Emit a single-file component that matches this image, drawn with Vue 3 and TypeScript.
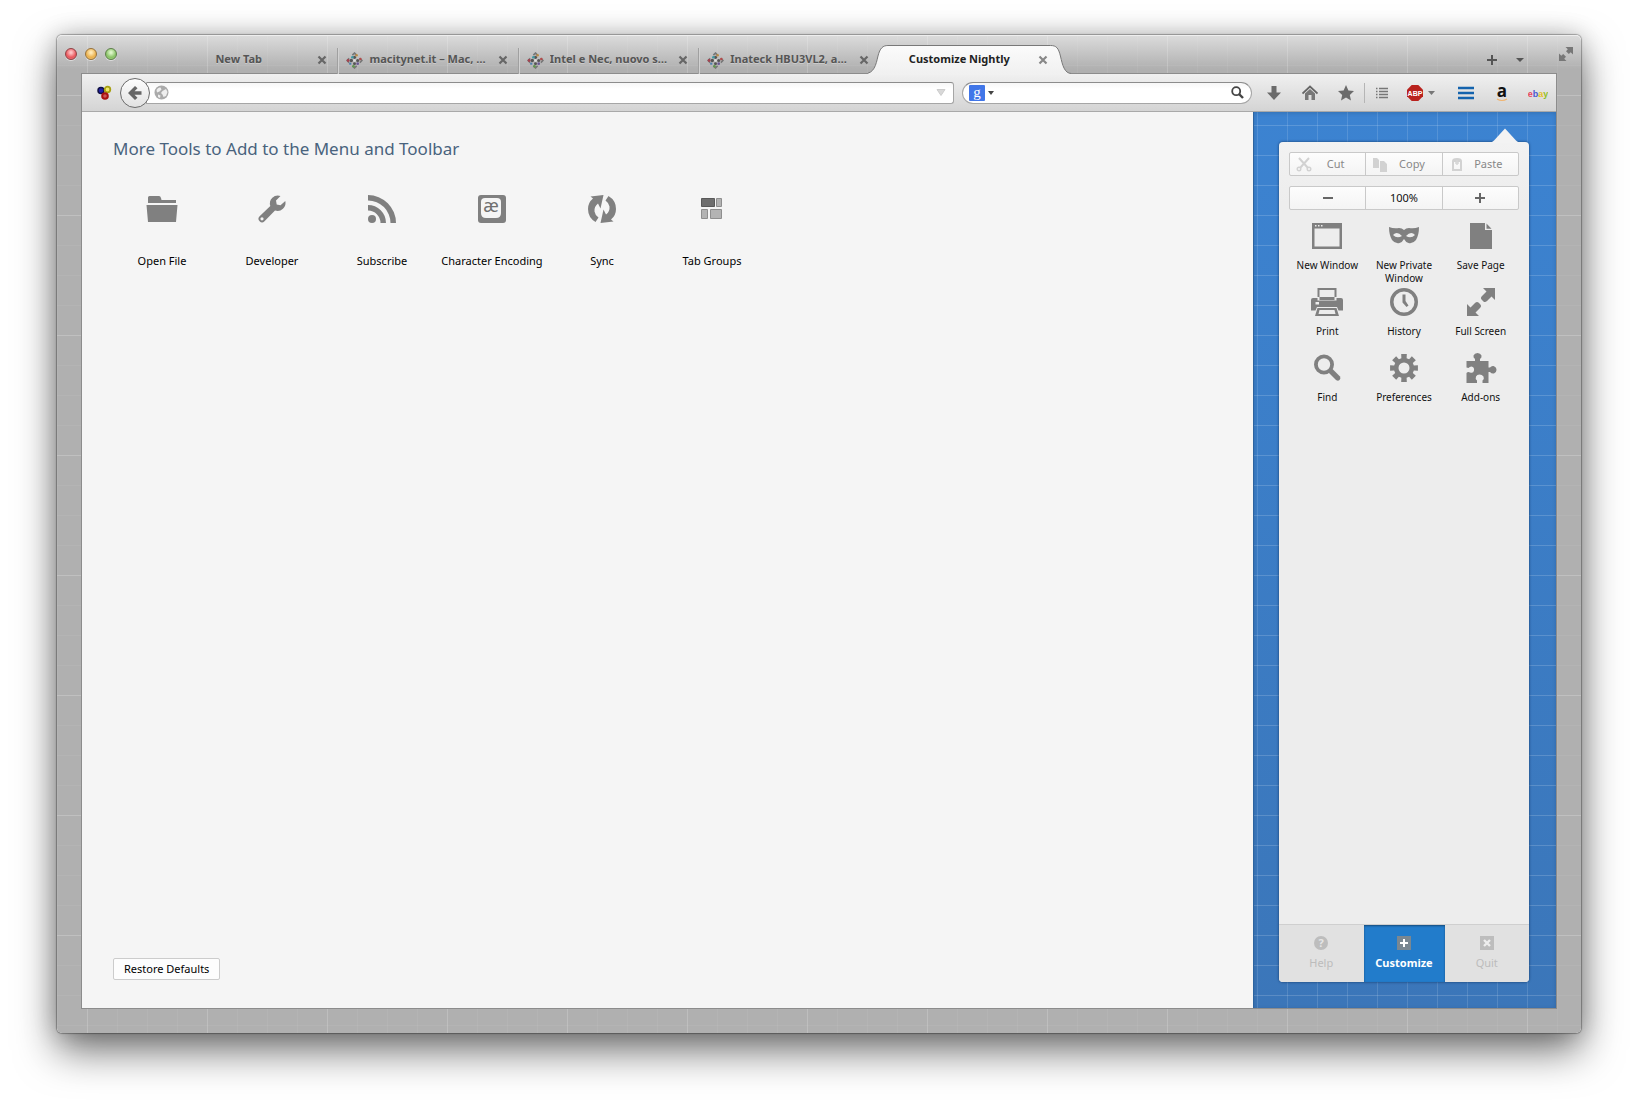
<script setup lang="ts">
import { ref } from 'vue'

interface Shape {
  d: string
  fill?: string
  stroke?: string
  width?: number
}
interface Tool {
  label: string
  shapes: Shape[]
  glyph?: string
}
interface Tab {
  title: string
  icon: boolean
  active?: boolean
}

const tabs: Tab[] = [
  { title: 'New Tab', icon: false },
  { title: 'macitynet.it – Mac, …', icon: true },
  { title: 'Intel e Nec, nuovo s…', icon: true },
  { title: 'Inateck HBU3VL2, a…', icon: true },
  { title: 'Customize Nightly', icon: false, active: true },
]

// Outline of a cog with eight square teeth, centred in a 32 unit box
function cog(): string {
  const points: string[] = []
  for (let i = 0; i < 8; i++) {
    const a = (i * Math.PI) / 4
    const parts: [number, number][] = [[-0.26, 10.2], [-0.2, 14.2], [0.2, 14.2], [0.26, 10.2]]
    for (const [off, r] of parts) {
      points.push(`${(16 + r * Math.sin(a + off)).toFixed(2)} ${(16 - r * Math.cos(a + off)).toFixed(2)}`)
    }
  }
  return `M${points.join('L')}ZM16 10.5A5.5 5.5 0 1 0 16 21.5A5.5 5.5 0 1 0 16 10.5Z`
}

const tools: Tool[] = [
  {
    label: 'Open File',
    shapes: [
      { d: 'M2 10V4.500Q2 3 3.500 3H13Q14.500 3 15 5L15.500 7H30V10ZM0.500 12H31.500L30 29H2Z' },
    ],
  },
  {
    label: 'Developer',
    shapes: [
      {
        d: 'M24.500 3A8 8 0 0 0 14.300 13L3.600 23.300A3.400 3.400 0 0 0 8.500 28.200L19 17.500A8 8 0 0 0 29.300 8L24.500 12.300L20.700 11.500L20 7.500ZM6 24.200A1.600 1.600 0 1 1 6 27.400A1.600 1.600 0 1 1 6 24.200Z',
      },
    ],
  },
  {
    label: 'Subscribe',
    shapes: [
      { d: 'M6 22A4 4 0 1 0 6 30A4 4 0 1 0 6 22Z' },
      { d: 'M2 2A28 28 0 0 1 30 30H24.500A22.500 22.500 0 0 0 2 7.500ZM2 12A18 18 0 0 1 20 30H14.500A12.500 12.500 0 0 0 2 17.500Z' },
    ],
  },
  {
    label: 'Character Encoding',
    glyph: 'æ',
    shapes: [
      { d: 'M5 2H27Q30 2 30 5V27Q30 30 27 30H5Q2 30 2 27V5Q2 2 5 2Z' },
      { d: 'M9 5H21Q25 5 25 9V20Q25 25 20 25H10Q5 25 5 20V9Q5 5 9 5Z', fill: '#f5f5f5' },
    ],
  },
  {
    label: 'Sync',
    shapes: [
      { d: 'M4.500 3.500L17.500 2L14.500 15.500L12 10.500Q8 13.500 8.500 18.500Q9 22 12.500 24.500L9.500 29Q2 24.500 2 16Q2 9.500 7 5.500Z' },
      { d: 'M27.500 28.500L14.500 30L17.500 16.500L20 21.500Q24 18.500 23.500 13.500Q23 10 19.500 7.500L22.500 3Q30 7.500 30 16Q30 22.500 25 26.500Z' },
    ],
  },
  {
    label: 'Tab Groups',
    shapes: [
      { d: 'M5.500 5.500H18.500V13.500H5.500Z', fill: '#6e6e6e', stroke: '#595959', width: 1 },
      { d: 'M20.500 5.500H25.500V13.500H20.500ZM5.500 16.500H11.500V25.500H5.500ZM14.500 16.500H25.500V25.500H14.500Z', fill: '#b3b3b3', stroke: '#8e8e8e', width: 1 },
    ],
  },
]

const menuItems: Tool[] = [
  {
    label: 'New Window',
    shapes: [
      { d: 'M1 3H31V29H1ZM3.500 8.500V26.500H28.500V8.500ZM4 5V6.500H5.500V5ZM7 5V6.500H8.500V5ZM10 5V6.500H11.500V5Z' },
    ],
  },
  {
    label: 'New Private Window',
    shapes: [
      {
        d: 'M1 7Q6 9 11 8Q14 8 16 10Q18 8 21 8Q26 9 31 7Q31 15 28 20Q25 24 20.500 23Q17.500 22 16 19Q14.500 22 11.500 23Q7 24 4 20Q1 15 1 7ZM5 15Q9 10.500 14 16Q9 19 5 15ZM27 15Q23 10.500 18 16Q23 19 27 15Z',
      },
    ],
  },
  {
    label: 'Save Page',
    shapes: [{ d: 'M5 3H20V10H27V29H5ZM21.500 3.500L26.500 8.800H21.500Z' }],
  },
  {
    label: 'Print',
    shapes: [
      {
        d: 'M6.500 2H25.500V11H6.500ZM8.500 4V14H23.500V4Z',
      },
      { d: 'M2 12H6.500V14.500H25.500V12H30Q32 12 32 14V24.500H27.500L26 21H6L4.500 24.500H0V14Q0 12 2 12ZM4.500 16V18.500H8V16Z' },
      { d: 'M6.500 22H25.500L28 30H4ZM8.500 24L7.500 28H24.500L23.500 24Z' },
    ],
  },
  {
    label: 'History',
    shapes: [
      { d: 'M16 2A14 14 0 1 0 16 30A14 14 0 1 0 16 2ZM16 5.500A10.500 10.500 0 1 1 16 26.500A10.500 10.500 0 1 1 16 5.500Z' },
      { d: 'M14.500 8.500H17.500V15L20.500 19.500L18.500 21L14.500 16.500Z' },
    ],
  },
  {
    label: 'Full Screen',
    shapes: [
      { d: 'M18 2H30V14L26.500 10.500L22 15Q20 17 18.200 15.200L16.800 13.800Q15 12 17 10L21.500 5.500ZM14 30H2V18L5.500 21.500L10 17Q12 15 13.800 16.800L15.200 18.200Q17 20 15 22L10.500 26.500Z' },
    ],
  },
  {
    label: 'Find',
    shapes: [
      { d: 'M13 2.500A10 10 0 1 0 13 22.500A10 10 0 1 0 13 2.500ZM13 6.300A6.200 6.200 0 1 1 13 18.700A6.200 6.200 0 1 1 13 6.300Z' },
      { d: 'M18.500 17L21 16.500L29 24.500Q30 26.500 28.500 28Q27 29.500 25 28L17.500 20.500Z' },
    ],
  },
  { label: 'Preferences', shapes: [{ d: cog() }] },
  {
    label: 'Add-ons',
    shapes: [
      {
        d: 'M1.500 9H10V7Q8 5.500 8.500 3.500Q9.500 1 12.500 1Q15.500 1 16.500 3.500Q17 5.500 15 7V9H23.500V15.500H25Q26.500 13.500 28.500 14Q31.500 15 31.500 18Q31.500 20.500 29 21.500Q26.500 22 25 20H23.500V31H17.500V28.500Q19.500 26.500 18.500 24.500Q17 22.500 14.500 22.500Q12 22.500 11 24.500Q10 26.500 12 28.500V31H1.500V21Q3 19.500 5 20.500Q8.500 21.500 9 18.500Q9.500 15 6.500 14.500Q4.500 14.500 3.500 16L1.500 15.500Z',
      },
    ],
  },
]

const address = ref('')
const query = ref('')
</script>

<template>
  <div class="desktop">
    <div class="window">
      <header class="titlebar">
        <div class="lights">
          <button class="light red" aria-label="Close window"></button>
          <button class="light amber" aria-label="Minimize window"></button>
          <button class="light green" aria-label="Zoom window"></button>
        </div>
        <nav class="tabs" aria-label="Tabs">
          <div v-for="tab in tabs" :key="tab.title" class="tab" :class="{ active: tab.active }">
            <svg v-if="tab.active" class="tab-shape" viewBox="0 0 204 30" preserveAspectRatio="none" aria-hidden="true">
              <defs>
                <linearGradient id="tabfill" x1="0" y1="0" x2="0" y2="1">
                  <stop offset="0" stop-color="#fbfbfb" />
                  <stop offset="1" stop-color="#f0f0f0" />
                </linearGradient>
              </defs>
              <path d="M-3 30V28.500C6 28.500 8 20 10 11C12 3 15 0.500 20 0.500H183C189 0.500 191 3 193 11C195 20 197 28.500 204 28.500V30Z" fill="url(#tabfill)" />
              <path d="M-3 28.500C6 28.500 8 20 10 11C12 3 15 0.500 20 0.500H183C189 0.500 191 3 193 11C195 20 197 28.500 204 28.500" fill="none" stroke="#777" />
            </svg>
            <button class="tab-main">
              <svg v-if="tab.icon" class="favicon" viewBox="0 0 16 16" aria-hidden="true">
                <g fill="#555"><circle cx="8" cy="5" r="1.500" /><circle cx="5" cy="8" r="1.600" /><circle cx="11" cy="8" r="1.500" /><circle cx="8" cy="11" r="1.400" /></g>
                <path d="M6 3L8 1L10 3M13 6L15 8L13 10M10 13L8 15L6 13M3 10L1 8L3 6" fill="none" stroke="#777" stroke-width="1.500" />
                <circle cx="10" cy="3" r="1.200" fill="#b98a45" /><circle cx="6" cy="5" r="1.200" fill="#3d9ba5" /><circle cx="13.500" cy="6.500" r="1.200" fill="#b24a4a" /><circle cx="2" cy="8" r="1.300" fill="#a5424f" /><circle cx="11" cy="11" r="1.300" fill="#6c5a96" /><circle cx="7" cy="13.500" r="1.200" fill="#5f9a4c" /><circle cx="4" cy="11" r="1.100" fill="#4f7fae" />
                <circle cx="8" cy="8" r="1.200" fill="#ddd" />
              </svg>
              <span class="tab-title">{{ tab.title }}</span>
            </button>
            <button class="tab-close" :aria-label="`Close ${tab.title}`">
              <svg viewBox="0 0 10 10"><path d="M1.500 1.500L8.500 8.500M8.500 1.500L1.500 8.500" stroke="currentColor" stroke-width="2.200" /></svg>
            </button>
          </div>
        </nav>
        <div class="strip-end">
          <button class="plain" aria-label="Open a new tab">
            <svg width="12" height="12" viewBox="0 0 12 12"><path d="M6 1V11M1 6H11" stroke="#555" stroke-width="2" /></svg>
          </button>
          <button class="plain" aria-label="List all tabs">
            <svg width="8" height="4" viewBox="0 0 8 4"><path d="M0 0H8L4 4Z" fill="#555" /></svg>
          </button>
        </div>
        <button class="plain expand" aria-label="Enter full screen">
          <svg width="14" height="14" viewBox="0 0 14 14"><path d="M6.500 0H14V7.500L11.700 5.200L9.800 7L7 4.200L8.800 2.300ZM7.500 14H0V6.500L2.300 8.800L4.200 7L7 9.800L5.200 11.700Z" fill="#777" /></svg>
        </button>
      </header>

      <main class="browser">
        <div class="toolbar">
          <button class="plain addon" aria-label="Collusion">
            <svg width="16" height="16" viewBox="0 0 16 16"><circle cx="5" cy="5.500" r="3" fill="#22a" stroke="#114" stroke-width="1.500" /><circle cx="11.500" cy="4.500" r="2.800" fill="#eee66a" stroke="#a8a012" stroke-width="1.800" /><circle cx="9" cy="11" r="2.800" fill="#c55" stroke="#a11" stroke-width="2" /></svg>
          </button>
          <button class="back" aria-label="Back">
            <svg width="16" height="16" viewBox="0 0 16 16"><path d="M1 8L8 1L10.500 3.200L7.500 6.300H14.500V9.700H7.500L10.500 12.800L8 15Z" fill="#666" /></svg>
          </button>
          <div class="urlbar">
            <svg width="15" height="15" viewBox="0 0 15 15" aria-hidden="true"><circle cx="7.500" cy="7.500" r="7" fill="#aaa" /><path d="M2.500 5Q4 2 6.500 2.500L7.500 4.500L5.500 6.500L3 7.500ZM8.500 6L12 4L13.500 7L12 11L9.500 12L8.500 9.500L7 8ZM4 9.500L6.500 10.500L6 13L4 12Z" fill="#eee" /></svg>
            <input id="address" v-model="address" type="text" aria-label="Address" />
            <button class="plain" aria-label="Show history">
              <svg width="10" height="7" viewBox="0 0 10 7"><path d="M1 0.500H9L5 6.500Z" fill="#d8d8d8" stroke="#ccc" /></svg>
            </button>
          </div>
          <div class="searchbar">
            <button class="plain engine" aria-label="Search engine">
              <svg width="16" height="20" viewBox="0 0 16 20"><rect y="2" width="16" height="16" rx="1" fill="#4176e8" /><text x="8" y="14" text-anchor="middle" font-family="Liberation Serif, serif" font-size="15" fill="#fff">g</text></svg>
              <svg width="6" height="4" viewBox="0 0 6 4"><path d="M0 0H6L3 4Z" fill="#444" /></svg>
            </button>
            <input id="query" v-model="query" type="text" aria-label="Search" />
            <button class="plain" aria-label="Go">
              <svg width="13" height="13" viewBox="0 0 13 13"><circle cx="5.200" cy="5.200" r="4" fill="none" stroke="#444" stroke-width="1.800" /><path d="M8 8L12 12" stroke="#444" stroke-width="2.400" /></svg>
            </button>
          </div>
          <div class="actions">
            <button class="plain action" aria-label="Downloads">
              <svg width="16" height="16" viewBox="0 0 16 16"><path d="M5.500 1H10.500V7.500H15L8 15L1 7.500H5.500Z" fill="#6b6b6b" /></svg>
            </button>
            <button class="plain action" aria-label="Home">
              <svg width="16" height="16" viewBox="0 0 16 16"><path d="M0.500 8.500L8 1.500L15.500 8.500" fill="none" stroke="#666" stroke-width="1.800" /><path d="M3 8.500L8 4L13 8.500V15H9.500V10H6.500V15H3Z" fill="#777" /></svg>
            </button>
            <button class="plain action" aria-label="Bookmark this page">
              <svg width="16" height="16" viewBox="0 0 16 16"><path d="M8 0L10.400 5.400L16 6L11.800 9.900L13 15.500L8 12.600L3 15.500L4.200 9.900L0 6L5.600 5.400Z" fill="#6b6b6b" /></svg>
            </button>
            <button class="plain action listing" aria-label="Bookmarks">
              <svg width="12" height="12" viewBox="0 0 12 12"><path d="M0 1.500H1.500M3 1.500H12M0 4.500H1.500M3 4.500H12M0 7.500H1.500M3 7.500H12M0 10.500H1.500M3 10.500H12" stroke="#777" stroke-width="1.400" /></svg>
            </button>
            <button class="plain blocker" aria-label="Adblock Plus">
              <svg width="16" height="16" viewBox="0 0 16 16"><path d="M4.700 0H11.300L16 4.700V11.300L11.300 16H4.700L0 11.300V4.700Z" fill="#b9221d" /><text x="8" y="11" text-anchor="middle" font-family="Liberation Sans Narrow, Liberation Sans, sans-serif" font-weight="700" font-size="7" fill="#fff">ABP</text></svg>
              <svg width="7" height="4" viewBox="0 0 7 4"><path d="M0 0H7L3.500 4Z" fill="#777" /></svg>
            </button>
            <button class="plain action" aria-label="Open menu">
              <svg width="16" height="14" viewBox="0 0 16 14"><path d="M0 2H16M0 7H16M0 12H16" stroke="#1463ad" stroke-width="2.600" /></svg>
            </button>
            <button class="plain action" aria-label="Amazon">
              <svg width="16" height="28" viewBox="0 0 16 28"><text x="8" y="18" text-anchor="middle" font-family="Open Sans, sans-serif" font-weight="700" font-size="17" fill="#111">a</text><path d="M3 20Q8 23 13 20" fill="none" stroke="#f1b46f" stroke-width="1.200" /></svg>
            </button>
            <button class="plain action" aria-label="eBay">
              <svg width="20" height="14" viewBox="0 0 20 14"><text x="10" y="11" text-anchor="middle" font-family="Liberation Sans, sans-serif" font-size="9" font-weight="700"><tspan fill="#e8485c">e</tspan><tspan fill="#4a58d0">b</tspan><tspan fill="#e6bf1e">a</tspan><tspan fill="#93c01f">y</tspan></text></svg>
            </button>
          </div>
        </div>

        <div class="content">
          <section class="palette">
            <h1>More Tools to Add to the Menu and Toolbar</h1>
            <ul class="tools">
              <li v-for="tool in tools" :key="tool.label">
                <button class="tool">
                  <svg class="icon" viewBox="0 0 32 32" aria-hidden="true">
                    <path v-for="shape in tool.shapes" :key="shape.d" :d="shape.d" :fill="shape.fill ?? '#808080'" :stroke="shape.stroke ?? 'none'" :stroke-width="shape.width ?? 0" fill-rule="evenodd" />
                    <text v-if="tool.glyph" x="15" y="19" text-anchor="middle" font-size="18" fill="#707070">{{ tool.glyph }}</text>
                  </svg>
                  <span>{{ tool.label }}</span>
                </button>
              </li>
            </ul>
            <button class="restore">Restore Defaults</button>
          </section>

          <aside class="blueprint">
            <div class="panel">
              <svg class="pointer" viewBox="0 0 28 14" aria-hidden="true"><path d="M0 14Q2 13 3 12L14 0L25 12Q26 13 28 14Z" fill="#f3f3f3" /></svg>
              <div class="split edit">
                <button disabled>
                  <svg viewBox="0 0 16 16" aria-hidden="true"><path d="M3 2L12 12M13 2L4 12" stroke="#d2d2d2" stroke-width="2" /><circle cx="3" cy="13" r="1.800" fill="none" stroke="#d2d2d2" stroke-width="1.400" /><circle cx="13" cy="13" r="1.800" fill="none" stroke="#d2d2d2" stroke-width="1.400" /></svg>
                  <span>Cut</span>
                </button>
                <button disabled>
                  <svg viewBox="0 0 16 16" aria-hidden="true"><path d="M1 2H5L7 4V12H1ZM8 5H12L15 8V16H8Z" fill="#d2d2d2" /></svg>
                  <span>Copy</span>
                </button>
                <button disabled>
                  <svg viewBox="0 0 16 16" aria-hidden="true"><path d="M3 5Q3 2 8 2Q13 2 13 5V15H3ZM5 6V13H11V6Z" fill="#d2d2d2" fill-rule="evenodd" /><path d="M8 4V9M6 7H10" stroke="#d6d6d6" stroke-width="1.500" /></svg>
                  <span>Paste</span>
                </button>
              </div>
              <div class="split zoom">
                <button aria-label="Zoom out"><svg width="10" height="10" viewBox="0 0 10 10"><path d="M0 5H10" stroke="#666" stroke-width="2" /></svg></button>
                <button>100%</button>
                <button aria-label="Zoom in"><svg width="10" height="10" viewBox="0 0 10 10"><path d="M0 5H10M5 0V10" stroke="#666" stroke-width="2" /></svg></button>
              </div>
              <ul class="menu">
                <li v-for="item in menuItems" :key="item.label">
                  <button class="entry">
                    <svg class="icon" viewBox="0 0 32 32" aria-hidden="true">
                      <path v-for="shape in item.shapes" :key="shape.d" :d="shape.d" fill="#808080" fill-rule="evenodd" />
                    </svg>
                    <span>{{ item.label }}</span>
                  </button>
                </li>
              </ul>
              <footer class="foot">
                <button class="faded" disabled>
                  <svg viewBox="0 0 14 14" aria-hidden="true"><circle cx="7" cy="7" r="7" fill="#bdbdbd" /><text x="7" y="11" text-anchor="middle" font-size="11" font-weight="700" fill="#e6e6e6">?</text></svg>
                  Help
                </button>
                <button class="current">
                  <svg viewBox="0 0 14 14" aria-hidden="true"><rect width="14" height="14" fill="#7a8791" /><path d="M7 3V11M3 7H11" stroke="#fff" stroke-width="2" /></svg>
                  Customize
                </button>
                <button class="faded" disabled>
                  <svg viewBox="0 0 14 14" aria-hidden="true"><rect width="14" height="14" fill="#bdbdbd" /><path d="M4 4L10 10M10 4L4 10" stroke="#eee" stroke-width="2.400" /></svg>
                  Quit
                </button>
              </footer>
            </div>
          </aside>
        </div>
      </main>
    </div>
  </div>
</template>

<style>
body {
  background: #fff;
}
</style>

<style scoped>
* {
  box-sizing: border-box;
}
.desktop {
  display: flex;
  min-height: 100vh;
  padding: 35px 57px 79px;
  font-family: "Noto Sans", "Open Sans", sans-serif;
  font-size: 11px;
  color: #111;
  overflow: hidden;
}
button {
  margin: 0;
  padding: 0;
  border: 0;
  background: none;
  font: inherit;
  color: inherit;
}
svg {
  display: block;
  flex: none;
}
ul {
  margin: 0;
  padding: 0;
  list-style: none;
}
.plain {
  display: flex;
  align-items: center;
  justify-content: center;
}
.window {
  flex: 1;
  min-width: 0;
  display: flex;
  flex-direction: column;
  padding: 0 25px 25px;
  border-radius: 5px;
  background-image:
    linear-gradient(to right, rgba(255, 255, 255, 0.13) 1px, transparent 1px),
    linear-gradient(to bottom, rgba(255, 255, 255, 0.16) 1px, transparent 1px),
    linear-gradient(to right, rgba(255, 255, 255, 0.05) 1px, transparent 1px),
    linear-gradient(to bottom, rgba(255, 255, 255, 0.05) 1px, transparent 1px),
    linear-gradient(to bottom, #dcdcdc, #b0b0b0 34px, #b0b0b0);
  background-size: 120px 120px, 120px 120px, 30px 30px, 30px 30px, 100% 100%;
  background-position: 30px 0, 0 60px, 0 0, 0 0, 0 0;
  box-shadow:
    inset 0 1px 0 #eee,
    0 0 1px 1px rgba(0, 0, 0, 0.3),
    0 0 24px rgba(0, 0, 0, 0.2),
    0 18px 40px rgba(0, 0, 0, 0.55);
}
.titlebar {
  display: flex;
  height: 39px;
  margin: 0 -25px;
}
.lights {
  display: flex;
  gap: 8px;
  width: 102px;
  padding: 13px 0 0 8px;
}
.light {
  width: 12px;
  height: 12px;
  border-radius: 50%;
  box-shadow: 0 1px 0 rgba(255, 255, 255, 0.5);
}
.red {
  border: 1px solid #8f4145;
  background: radial-gradient(circle at 50% 35%, #ffc2c4 10%, #e9565c 60%, #ee8a8d);
}
.amber {
  border: 1px solid #96703a;
  background: radial-gradient(circle at 50% 35%, #ffe9b5 10%, #eab04c 60%, #f6d58c);
}
.green {
  border: 1px solid #5d7f4a;
  background: radial-gradient(circle at 50% 35%, #dcf5c8 10%, #88c265 60%, #b6e293);
}
.tabs {
  display: flex;
  flex: 0 1 900px;
  min-width: 0;
  padding-top: 13px;
}
.tab {
  position: relative;
  display: flex;
  flex: 1;
  min-width: 0;
  align-items: center;
  padding: 0 11px 2px 7px;
  color: #555;
  font-weight: 700;
}
.tab:nth-child(-n + 3) {
  border-right: 1px solid #d2d2d2;
  box-shadow: inset -1px 0 0 #a0a0a0;
}
.tab-shape {
  position: absolute;
  left: -12px;
  right: -12px;
  bottom: -1px;
  width: calc(100% + 24px);
  height: 30px;
}
.tab-main {
  position: relative;
  display: flex;
  flex: 1;
  min-width: 0;
  align-items: center;
  gap: 6px;
  text-shadow: 0 1px 0 rgba(255, 255, 255, 0.3);
}
.favicon {
  width: 17px;
  height: 17px;
}
.tab-title {
  flex: 1;
  overflow: hidden;
  white-space: nowrap;
  text-align: center;
  line-height: 16px;
  padding-bottom: 2px;
}
.favicon + .tab-title {
  text-align: left;
}
.tab-close {
  position: relative;
  width: 10px;
  height: 10px;
  margin-left: 6px;
  color: #666;
}
.favicon + .tab-title + .tab-close {
  margin-left: 4px;
}
.active {
  color: #222;
}
.active .tab-close {
  color: #888;
}
.strip-end {
  display: flex;
  gap: 18px;
  margin-left: auto;
  padding: 11px 35px 0 0;
}
.expand {
  align-self: flex-start;
  margin: 12px 8px 0 0;
}
.browser {
  flex: 1;
  display: flex;
  flex-direction: column;
  min-height: 0;
  box-shadow: 0 0 0 1px #8c8c8c;
}
.toolbar {
  display: flex;
  align-items: center;
  height: 38px;
  padding: 0 0 0 14px;
  border-bottom: 1px solid #a9a9a9;
  background: linear-gradient(#f0f0f0, #d4d4d4);
}
.addon {
  margin-right: 8px;
}
.back {
  position: relative;
  display: flex;
  align-items: center;
  justify-content: center;
  flex: none;
  width: 30px;
  height: 30px;
  border: 1px solid #6b6b6b;
  border-radius: 50%;
  background: linear-gradient(#fdfdfd, #e2e2e2);
}
.urlbar,
.searchbar {
  display: flex;
  align-items: center;
  height: 22px;
  border: 1px solid #a6a6a6;
  border-top-color: #8c8c8c;
  background: linear-gradient(#f7f7f7, #fff 6px);
}
.urlbar {
  flex: 1;
  min-width: 0;
  margin: 0 8px 0 -4px;
  padding: 0 7px;
  border-radius: 0 3px 3px 0;
}
.searchbar {
  flex: 0 1 290px;
  min-width: 0;
  padding: 0 7px 0 6px;
  border-radius: 11px;
}
.engine {
  gap: 3px;
}
input {
  flex: 1;
  min-width: 0;
  height: 18px;
  padding: 0 6px;
  border: 0;
  outline: 0;
  background: transparent;
  font: inherit;
}
.actions {
  display: flex;
  align-items: center;
  margin-left: 4px;
}
.action {
  width: 36px;
  height: 20px;
}
.listing {
  width: 34px;
  border-left: 1px solid #b5b5b5;
}
.blocker {
  gap: 5px;
  width: 50px;
  padding-right: 4px;
}
.content {
  flex: 1;
  display: flex;
}
.palette {
  flex: 1;
  min-width: 0;
  display: flex;
  flex-direction: column;
  align-items: flex-start;
  padding: 24px 31px 28px;
  background: #f5f5f5;
}
h1 {
  margin: 0;
  font-size: 17px;
  line-height: 26px;
  font-weight: 400;
  color: #49637d;
}
.tools {
  display: flex;
  flex-wrap: wrap;
  margin: 31px 0 0 -6px;
}
.tool {
  display: flex;
  flex-direction: column;
  align-items: center;
  gap: 28px;
  width: 110px;
  line-height: 16px;
  white-space: nowrap;
  color: #000;
}
.icon {
  width: 32px;
  height: 32px;
}
.restore {
  height: 22px;
  margin-top: auto;
  padding: 0 10px 1px;
  border: 1px solid #ccc;
  border-radius: 2px;
  background: #fdfdfd;
  color: #000;
}
.blueprint {
  display: flex;
  flex: none;
  width: 303px;
  padding: 30px 27px 26px 25px;
  border-left: 1px solid #2d64a0;
  background-image:
    linear-gradient(to right, rgba(255, 255, 255, 0.13) 1px, transparent 1px),
    linear-gradient(to bottom, rgba(255, 255, 255, 0.16) 1px, transparent 1px),
    linear-gradient(to bottom, #3c83d1, #3b76b9);
  background-size: 30px 30px, 30px 30px, 100% 100%;
  background-position: 3px 0, 0 13px, 0 0;
  box-shadow: inset 0 1px 4px rgba(0, 0, 0, 0.15);
}
.panel {
  position: relative;
  flex: 1;
  display: flex;
  flex-direction: column;
  border-radius: 4px;
  background: linear-gradient(#f2f2f2, #ededed 60px);
  box-shadow: 0 0 2px 1px rgba(20, 60, 110, 0.5);
}
.pointer {
  position: absolute;
  top: -14px;
  right: 10px;
  width: 28px;
  height: 15px;
}
.split {
  display: flex;
  height: 24px;
  margin: 10px 10px 0;
  border: 1px solid #c9c9c9;
  border-radius: 2px;
  background: linear-gradient(#fdfdfd, #f4f4f4);
}
.split button {
  flex: 1;
  display: flex;
  align-items: center;
  justify-content: center;
  padding-bottom: 1px;
  line-height: 16px;
}
.split button + button {
  border-left: 1px solid #c9c9c9;
}
.edit button {
  padding: 0 6px 1px;
  color: #888;
}
.edit svg {
  width: 16px;
  height: 16px;
}
.edit span {
  flex: 1;
  text-align: center;
}
.menu {
  display: grid;
  grid-template-columns: repeat(3, 1fr);
  grid-auto-rows: 66px;
  margin: 10px 10px 0;
}
.entry {
  display: flex;
  flex-direction: column;
  align-items: center;
  gap: 7px;
  width: 100%;
  font-size: 10px;
  line-height: 13px;
}
.foot {
  display: flex;
  height: 58px;
  margin-top: auto;
  border-top: 1px solid #cfcfcf;
  border-radius: 0 0 4px 4px;
  background: #e1e1e1;
}
.foot button {
  display: flex;
  flex: 1;
  flex-direction: column;
  align-items: center;
  padding-top: 11px;
  gap: 5px;
  line-height: 16px;
}
.foot svg {
  width: 14px;
  height: 14px;
}
.foot .faded {
  color: #bcbcbc;
}
.foot .current {
  flex: none;
  width: 81px;
  background: #227ccb;
  color: #fff;
  font-weight: 700;
  box-shadow: inset 0 1px 2px rgba(0, 0, 0, 0.4);
}
</style>
